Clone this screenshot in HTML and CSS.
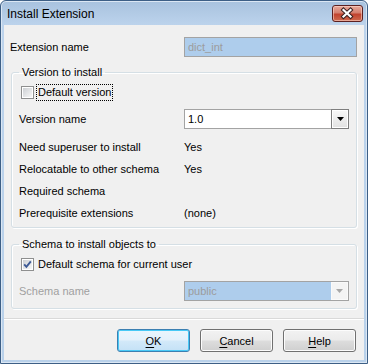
FILE: index.html
```html
<!DOCTYPE html>
<html>
<head>
<meta charset="utf-8">
<link rel="stylesheet" href="styles.css">
</head>
<body>
<div class="window">
  <div class="titlebar">
    <span class="title">Install Extension</span>
    <div class="close">
      <svg width="29" height="15" viewBox="0 0 29 15">
        <path d="M10.5 4 L17.5 10.5 M17.5 4 L10.5 10.5" stroke="#3a2020" stroke-width="4.2" stroke-linecap="square" fill="none"/>
        <path d="M10.5 4 L17.5 10.5 M17.5 4 L10.5 10.5" stroke="#ffffff" stroke-width="2.2" stroke-linecap="square" fill="none"/>
      </svg>
    </div>
  </div>
  <div class="content">
    <div class="row ext">
      <span class="lbl">Extension name</span>
      <div class="field disabled">dict_int</div>
    </div>

    <fieldset class="group g1">
      <legend>Version to install</legend>
      <div class="check-row">
        <span class="cb">
          <svg width="13" height="13" viewBox="0 0 13 13">
            <defs><linearGradient id="cbg1" x1="0" y1="0" x2="1" y2="1"><stop offset="0" stop-color="#cdd0d4"/><stop offset="1" stop-color="#f7f7f7"/></linearGradient></defs>
            <rect x="0.5" y="0.5" width="12" height="12" fill="#ffffff" stroke="#8e8f8f"/>
            <rect x="2" y="2" width="9" height="9" fill="url(#cbg1)"/>
          </svg>
        </span>
        <span class="focus">Default version</span>
      </div>
      <div class="row frow first">
        <span class="lbl">Version name</span>
        <div class="select">
          <span class="val">1.0</span>
          <span class="dd">
            <svg width="7" height="4" viewBox="0 0 7 4"><path d="M0 0 H7 L3.5 4 Z" fill="#000"/></svg>
          </span>
        </div>
      </div>
      <div class="row frow gap">
        <span class="lbl">Need superuser to install</span><span class="val">Yes</span>
      </div>
      <div class="row frow">
        <span class="lbl">Relocatable to other schema</span><span class="val">Yes</span>
      </div>
      <div class="row frow">
        <span class="lbl">Required schema</span><span class="val"></span>
      </div>
      <div class="row frow">
        <span class="lbl">Prerequisite extensions</span><span class="val">(none)</span>
      </div>
    </fieldset>

    <fieldset class="group g2">
      <legend>Schema to install objects to</legend>
      <div class="check-row">
        <span class="cb">
          <svg width="13" height="13" viewBox="0 0 13 13">
            <defs><linearGradient id="cbg2" x1="0" y1="0" x2="1" y2="1"><stop offset="0" stop-color="#cdd0d4"/><stop offset="1" stop-color="#f7f7f7"/></linearGradient></defs>
            <rect x="0.5" y="0.5" width="12" height="12" fill="#ffffff" stroke="#8e8f8f"/>
            <rect x="2" y="2" width="9" height="9" fill="url(#cbg2)"/>
            <path d="M3.2 6.4 L5.4 8.8 L9.8 3.4" stroke="#3d5a96" stroke-width="1.9" fill="none"/>
          </svg>
        </span>
        <span class="cbtext">Default schema for current user</span>
      </div>
      <div class="row frow first">
        <span class="lbl dis">Schema name</span>
        <div class="select disabled">
          <span class="val">public</span>
          <span class="dd">
            <svg width="7" height="4" viewBox="0 0 7 4"><path d="M0 0 H7 L3.5 4 Z" fill="#a8a8a8"/></svg>
          </span>
        </div>
      </div>
    </fieldset>

    <div class="sep"></div>

    <div class="buttons">
      <div class="btn default"><u>O</u>K</div>
      <div class="btn"><u>C</u>ancel</div>
      <div class="btn"><u>H</u>elp</div>
    </div>
  </div>
</div>
</body>
</html>
```

FILE: styles.css
```css
* { box-sizing: border-box; }
html, body { margin: 0; padding: 0; background: #ffffff; }
body {
  font-family: "Liberation Sans", Arial, sans-serif;
  font-size: 11px;
  color: #000;
}
.window {
  width: 368px;
  height: 364px;
  border: 1px solid #3d5f86;
  border-radius: 6px 6px 0 0;
  background: linear-gradient(#a8c2de, #bcd3ec 24px, #b9d1ea);
  padding: 0 3px 3px;
  display: flex;
  flex-direction: column;
  box-shadow: inset 0 0 0 1px #dbe7f4;
}
.titlebar {
  height: 24px;
  display: flex;
  align-items: center;
  justify-content: space-between;
  padding: 0 1px 0 3px;
}
.title {
  font-family: "Liberation Sans", Arial, sans-serif;
  font-size: 12px;
  color: #000;
  margin-top: 1px;
}
.close {
  width: 31px;
  height: 17px;
  border: 1px solid #5c2020;
  border-radius: 3px;
  background: linear-gradient(#e8a99b 0%, #d47f6f 45%, #c1422e 55%, #cf6a4f 100%);
  box-shadow: inset 0 0 0 1px rgba(255,220,210,0.55);
  display: flex;
  align-items: center;
  justify-content: center;
  margin-top: 1px;
}
.content {
  flex: 1;
  background: #f0f0f0;
  display: flex;
  flex-direction: column;
}
.row {
  display: flex;
  align-items: center;
}
.ext {
  margin-top: 12px;
  height: 20px;
}
.ext .lbl {
  width: 180px;
  padding-left: 6px;
}
.field {
  width: 173px;
  height: 20px;
  border: 1px solid #a3a3a3;
  padding-left: 3px;
  line-height: 18px;
}
.disabled {
  background: #aecdec;
  color: #9c9c9c;
}
.group {
  margin: 8px 7px 0;
  padding: 0 6px 3px 0;
  border: 1px solid #d5dfe5;
  border-radius: 3px;
  box-shadow: inset 1px 1px 0 #fff, 1px 1px 0 #fff;
  min-width: 0;
}
.group legend {
  margin-left: 7px;
  padding: 0 3px;
  line-height: 14px;
  height: 14px;
}
.g2 {
  margin-top: 9px;
  padding-bottom: 6px;
}
.check-row {
  display: flex;
  align-items: center;
  height: 22px;
  margin-top: 2px;
  padding-left: 9px;
}
.cb {
  width: 13px;
  height: 13px;
  display: block;
  margin-right: 2px;
}
.cb svg { display: block; }
.focus {
  border: 1px dotted #000;
  padding: 0 1px;
  line-height: 15px;
}
.cbtext {
  padding-left: 2px;
}
.frow {
  height: 22px;
}
.frow.first { margin-top: 5px; }
.frow.gap { margin-top: 6px; }
.frow .lbl {
  width: 172px;
  padding-left: 7px;
}
.dis { color: #a0a0a0; }
.select {
  width: 165px;
  height: 20px;
  border: 1px solid #a3a3a3;
  background: #fff;
  display: flex;
  align-items: stretch;
  justify-content: space-between;
}
.select .val {
  padding-left: 3px;
  line-height: 18px;
}
.select.disabled { background: #aecdec; color: #9c9c9c; }
.dd {
  width: 18px;
  border: 1px solid #7e7e7e;
  margin: -1px -1px -1px 0;
  background: linear-gradient(#f8f8f8, #e2e2e2);
  box-shadow: inset 0 0 0 1px #fff;
  display: flex;
  align-items: center;
  justify-content: center;
}
.dd svg { display: block; }
.select.disabled .dd {
  background: #f4f4f4;
  margin: 0;
  border: 1px solid #fafafa;
  box-shadow: none;
  width: 17px;
}
.sep {
  margin-top: 9px;
  height: 2px;
  border-top: 1px solid #d9d9d9;
  border-bottom: 1px solid #ffffff;
}
.buttons {
  margin-top: 9px;
  display: flex;
  justify-content: flex-end;
  gap: 10px;
  padding-right: 8px;
}
.btn {
  width: 73px;
  height: 23px;
  border: 1px solid #707070;
  border-radius: 3px;
  background: linear-gradient(#f2f2f2 0%, #ebebeb 48%, #dddddd 52%, #cfcfcf 100%);
  box-shadow: inset 0 0 0 1px #fcfcfc;
  display: flex;
  align-items: center;
  justify-content: center;
  font-size: 11px;
}
.btn u { text-decoration: underline; text-underline-offset: 2px; }
.btn.default {
  border-color: #3c7fb1;
  box-shadow: inset 0 0 0 1px #48c9f6;
  background: linear-gradient(#eaf6fd 0%, #e4f1fb 48%, #d3e9f9 52%, #c4e1f6 100%);
}
```
